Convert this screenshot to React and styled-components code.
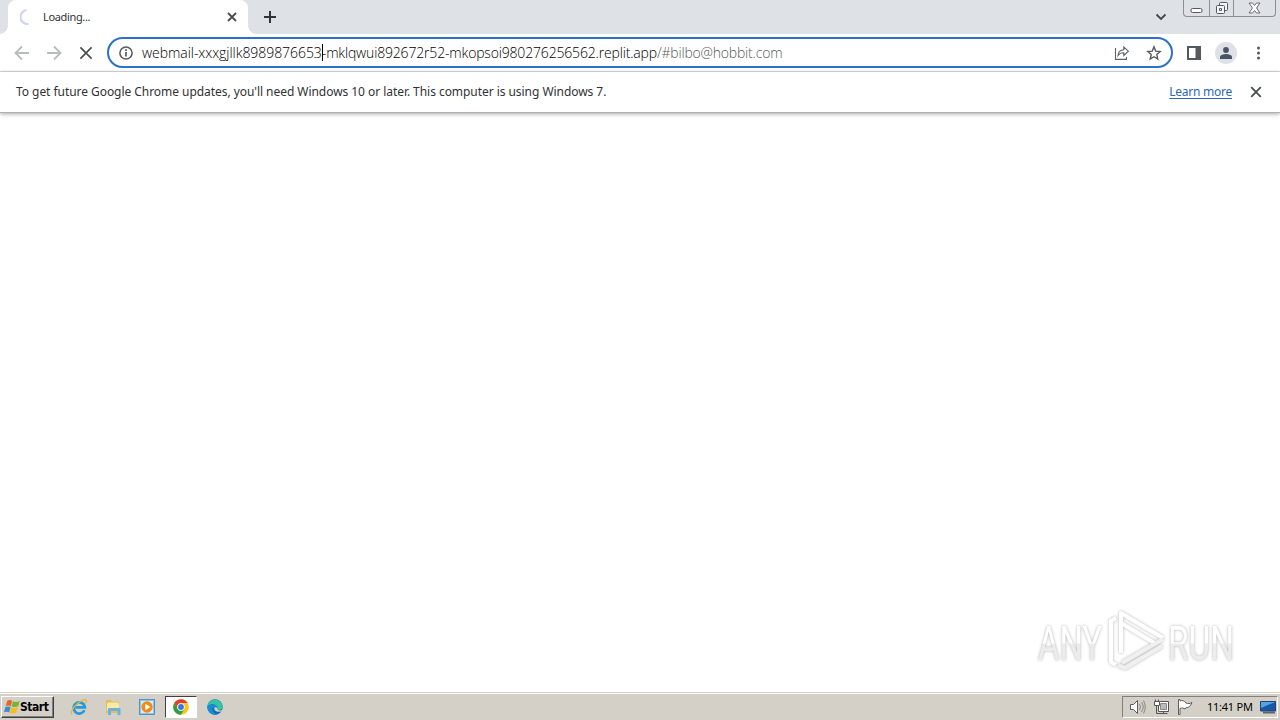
import React from 'react';
import styled, { createGlobalStyle } from 'styled-components';

const GlobalStyle = createGlobalStyle`
  * {
    box-sizing: border-box;
  }
  body {
    margin: 0;
    background: #fff;
    font-family: "Noto Sans", "Open Sans", sans-serif;
    overflow: hidden;
  }
  svg {
    display: block;
    flex: none;
  }
`;

const Screen = styled.div`
  display: flex;
  flex-direction: column;
  width: 1280px;
  height: 720px;
`;

const TabStrip = styled.div`
  display: flex;
  height: 34px;
  padding-left: 8px;
  background: #dee1e6;
`;

const Tab = styled.div`
  position: relative;
  display: flex;
  align-items: center;
  width: 240px;
  padding: 0 11px 0 12px;
  border-radius: 8px 8px 0 0;
  background: #fff;
  &::before,
  &::after {
    content: '';
    position: absolute;
    bottom: 0;
    width: 8px;
    height: 8px;
  }
  &::before {
    left: -8px;
    background: radial-gradient(circle at 0 0, #dee1e6 7.5px, #fff 8px);
  }
  &::after {
    right: -8px;
    background: radial-gradient(circle at 100% 0, #dee1e6 7.5px, #fff 8px);
  }
`;

const Text = styled.span`
  font-size: ${({ $size }) => $size || 12}px;
  line-height: 18px;
  letter-spacing: ${({ $spacing }) => $spacing || 0}px;
  color: ${({ $color }) => $color || '#303235'};
  white-space: pre;
`;

const TabTitle = styled(Text)`
  flex: 1;
  margin-left: 7px;
`;

const NewTab = styled.div`
  margin: 11px 0 0 16px;
`;

const WindowControls = styled.div`
  display: flex;
  margin-left: auto;
`;

const ControlGroup = styled.div`
  display: flex;
  width: 93px;
  height: 17px;
  margin: 0 4px 0 16px;
  border: 1px solid #8a8e96;
  border-top: none;
  border-radius: 0 0 4px 4px;
`;

const Control = styled.div`
  display: flex;
  align-items: center;
  justify-content: center;
  width: ${({ $width }) => $width}px;
  border-left: ${({ $first }) => ($first ? 'none' : '1px solid #8a8e96')};
`;

const Toolbar = styled.div`
  display: flex;
  align-items: center;
  height: 38px;
  padding: 0 13px;
  border-bottom: 1px solid #dadce0;
`;

const NavButton = styled.div`
  display: flex;
  justify-content: center;
  width: 18px;
  margin-right: 14px;
`;

const AddressBar = styled.div`
  display: flex;
  align-items: center;
  width: 1066px;
  height: 31px;
  margin-left: -2px;
  padding: 0 9px 0 10px;
  border: 2px solid #2a70cc;
  border-radius: 16px;
`;

const Url = styled.div`
  display: flex;
  flex: 1;
  align-items: center;
  margin-left: 9px;
`;

const UrlText = styled(Text)`
  font-family: "Open Sans", "Noto Sans", sans-serif;
  font-weight: 300;
`;

const Caret = styled.i`
  width: 1px;
  height: 17px;
  margin-right: -1px;
  background: #000;
`;

const BarActions = styled.div`
  display: flex;
  gap: 16px;
`;

const PanelButton = styled.div`
  margin-left: 14px;
`;

const Avatar = styled.div`
  display: flex;
  align-items: center;
  justify-content: center;
  width: 22px;
  height: 22px;
  margin: 0 14px;
  border-radius: 50%;
  background: #dee1e6;
`;

const InfoBar = styled.div`
  display: flex;
  align-items: center;
  height: 41px;
  padding: 0 18px 0 16px;
  border-bottom: 1px solid #b0b0b0;
  box-shadow: 0 1px 4px rgba(0, 0, 0, 0.35);
`;

const LearnMore = styled(Text)`
  margin: 0 18px 0 auto;
  text-decoration: underline;
  text-underline-offset: 2px;
`;

const Page = styled.main`
  display: flex;
  flex: 1;
  align-items: flex-end;
  justify-content: flex-end;
  padding-bottom: 19px;
`;

const Taskbar = styled.div`
  display: flex;
  align-items: center;
  height: 28px;
  padding: 1px 2px 0 1px;
  border-top: 1px solid #d4d0c8;
  box-shadow: inset 0 1px #fff;
  background: #d4d0c8;
`;

const StartButton = styled.div`
  display: flex;
  align-items: center;
  width: 53px;
  height: 22px;
  padding-left: 2px;
  border: 1px solid;
  border-color: #fff #404040 #404040 #fff;
  box-shadow: inset -1px -1px #808080;
  font: bold 12px "DejaVu Sans Condensed", "DejaVu Sans", sans-serif;
  letter-spacing: -0.45px;
  color: #000;
`;

const Launchers = styled.div`
  display: flex;
  margin-left: 9px;
`;

const Launcher = styled.div`
  display: flex;
  align-items: center;
  justify-content: center;
  width: 32px;
  height: 22px;
  margin-right: 2px;
  border: 1px solid;
  border-color: ${({ $active }) => ($active ? '#404040 #fff #fff #404040' : 'transparent')};
  background: ${({ $active }) => ($active ? '#fff' : 'transparent')};
`;

const Tray = styled.div`
  display: flex;
  align-items: center;
  gap: 7px;
  width: 156px;
  height: 22px;
  margin-left: auto;
  padding-left: 6px;
  border: 1px solid;
  border-color: #808080 #fff #fff #808080;
`;

const Clock = styled(Text)`
  margin-left: 7px;
`;

const WatermarkSvg = styled.svg`
  filter: drop-shadow(0 0 1.5px rgba(0, 0, 0, 0.3));
`;

const Cross = ({ size = 10, color = '#4a4d51', weight = 1.6 }) => (
  <svg width={size} height={size} viewBox="0 0 10 10" stroke={color} strokeWidth={weight}>
    <path d="M1 1l8 8M9 1l-8 8" />
  </svg>
);

const Arrow = ({ flip }) => (
  <svg width="18" height="18" viewBox="0 0 18 18" fill="none" stroke="#b9bbbe" strokeWidth="1.8" transform={flip ? 'scale(-1 1)' : undefined}>
    <path d="M16 9H3M9 2.5L2.5 9L9 15.5" />
  </svg>
);

const Spinner = () => (
  <svg width="16" height="16" viewBox="0 0 16 16" fill="none" stroke="#c9d2f8" strokeWidth="2">
    <path d="M6.5 1.1A7 7 0 0 0 8.5 15" />
  </svg>
);

const InfoIcon = () => (
  <svg width="14" height="14" viewBox="0 0 14 14" fill="none" stroke="#55585c" strokeWidth="1.5">
    <circle cx="7" cy="7" r="6.1" />
    <path d="M7 6v4.5M7 3.3v1.6" strokeWidth="1.7" />
  </svg>
);

const ShareIcon = () => (
  <svg width="16" height="16" viewBox="0 0 16 16" fill="none" stroke="#5f6368" strokeWidth="1.1">
    <path d="M1.5 3v11.4h11v-2.5" />
    <path d="M4 10.5C4.3 6.7 6.2 4.9 9.8 4.7V2l4.6 4.2-4.6 4.2V7.8C7.2 7.7 5.4 8.5 4 10.5z" />
  </svg>
);

const StarIcon = () => (
  <svg width="16" height="16" viewBox="0 0 16 16" fill="none" stroke="#55585c" strokeWidth="1.4">
    <path d="M8 1.8l1.7 4.3 4.5.4-3.4 3.1 1 4.4L8 11.7l-3.8 2.3 1-4.4-3.4-3.1 4.5-.4z" />
  </svg>
);

const PanelIcon = () => (
  <svg width="14" height="14" viewBox="0 0 14 14">
    <path d="M1 1h12v12H1z" fill="none" stroke="#55585c" strokeWidth="2" />
    <path d="M8.5 1H13v12H8.5z" fill="#55585c" />
  </svg>
);

const WindowsFlag = () => (
  <svg width="16" height="16" viewBox="0 0 16 16">
    <path d="M3.2 1.7c2-1 3.5-.8 5 .1L6.8 7.3C5 6.3 3.5 6.4 1.7 7.2z" fill="#e8642d" />
    <path d="M8.9 2.2c2 1 4 .9 6.8-.2l-1.5 5.3c-2 1-4.3 1.1-6.6.2z" fill="#78b52e" />
    <path d="M1.4 8.1C3.5 7.2 5 7.3 6.6 8.1L5.1 13.5C4 12.6 2.2 12.5 0 13.3z" fill="#3c8bd0" />
    <path d="M7.3 8.4c2 1 4.3.9 6.6-.1L12.4 13.7c-2 1-4.3 1.1-6.6.2z" fill="#f5bd24" />
  </svg>
);

const ExplorerE = () => (
  <svg width="18" height="18" viewBox="0 0 17 17" fill="none">
    <path d="M13.6 11.5A5.3 5.3 0 1 1 14 8.9H5" stroke="#269bdc" strokeWidth="2.6" />
    <path d="M2 15.5C-1 13 6 4.5 12 2c4-1.7 4 1 2.8 3" stroke="#e5b73b" strokeWidth="1.2" />
  </svg>
);

const FolderIcon = () => (
  <svg width="16" height="16" viewBox="0 0 16 16">
    <path d="M1 1h5l1 1.5h7V14H1z" fill="#e3bf5b" />
    <path d="M3 3.5h10l1 2v6H2V5z" fill="#fbeaa2" />
    <path d="M3 16V10q0-1 1-1h10.500q1 0 1 1v6H12.500v-4H6v4z" fill="#6cb2dc" />
  </svg>
);

const MediaIcon = () => (
  <svg width="16" height="16" viewBox="0 0 16 16">
    <rect x=".5" y=".5" width="15" height="15" fill="#8ac5ec" stroke="#4e93c9" />
    <rect x="2" y="2" width="12" height="12" fill="#d9edf9" />
    <circle cx="8" cy="8" r="5.7" fill="#f48a16" />
    <path d="M6.3 4.7l5.2 3.3-5.2 3.3z" fill="#fff" />
  </svg>
);

const ChromeIcon = () => (
  <svg width="16" height="16" viewBox="0 0 16 16">
    <circle cx="8" cy="8" r="7.8" fill="#f7c71d" />
    <path d="M1.25 4.1A7.8 7.8 0 0 1 14.75 4.1H8A3.9 3.9 0 0 0 4.62 9.95z" fill="#df3e30" />
    <path d="M1.25 4.1A7.8 7.8 0 0 0 8 15.8L11.38 9.95A3.9 3.9 0 0 1 4.62 9.95z" fill="#2b9d4c" />
    <circle cx="8" cy="8" r="3.7" fill="#fff" />
    <circle cx="8" cy="8" r="2.9" fill="#3479e0" />
  </svg>
);

const EdgeIcon = () => (
  <svg width="16" height="16" viewBox="0 0 16 16">
    <circle cx="8" cy="8" r="7.7" fill="#1669b4" />
    <path d="M.4 7A7.7 7.7 0 0 1 15.7 8c0 2.3-2 3.3-4.4 3.1-1.4-.2-1.9-.8-1.3-1.5C11.3 6.500 5.500 3 .4 7z" fill="#35c4a0" />
    <path d="M.4 7C5 3 11.3 6.5 10 9.6c-.7-.9-1.7-1.5-2.9-1.3C3.5 9 6 14.5 10 15.4A7.7 7.7 0 0 1 .4 7z" fill="#168dd5" />
    <path d="M7.6 8.500c-1.400 3 2.900 5.500 6.900 3.800L16 10.800c-2 1.200-5.500.8-5.800-1.100.2-1.200-1.600-1.900-2.600-1.200z" fill="#d4d0c8" />
  </svg>
);

const SpeakerIcon = () => (
  <svg width="17" height="16" viewBox="0 0 17 16" fill="none" stroke="#5c5c5c">
    <path d="M1.5 5.5h3l4-4v13l-4-4h-3z" fill="#fff" />
    <path d="M10.5 5q2 3 0 6M12.5 3q3.5 5 0 10M14.5 1.5q3.5 6.5 0 13" stroke="#888" />
  </svg>
);

const NetworkIcon = () => (
  <svg width="17" height="16" viewBox="0 0 17 16" fill="none" stroke="#555">
    <path d="M5.500 2.500h10v10h-10z" fill="#fff" />
    <path d="M7.500 4.500h6v6h-6z" fill="#bbb" stroke="#888" />
    <path d="M1.500 2.500h5v4h-5zM2.500 2.500V.5M5.500 2.500V.5" fill="#fff" />
    <path d="M3.500 6.500v8h11M10.500 12.500v2" />
  </svg>
);

const FlagIcon = () => (
  <svg width="16" height="16" viewBox="0 0 16 16" fill="#fff" stroke="#5c5c5c">
    <path d="M1.5.5v15H3V9.500c2-1 3.500-.5 5 .5l1-1.500c2 .5 4-.5 6-5-2 1-4 1.500-6 .5C7.500 1.500 5 1 3 2V.5z" />
  </svg>
);

const DesktopIcon = () => (
  <svg width="16" height="15" viewBox="0 0 16 15">
    <path d="M.5 1.5h15V11H.5z" fill="#1759a8" stroke="#24426b" />
    <path d="M1 2h14L1 8z" fill="#55a3e2" />
    <path d="M3 11.5h12V13.5H3z" fill="#5d6573" />
  </svg>
);

const Watermark = () => (
  <WatermarkSvg width="246" height="64" viewBox="0 0 246 64">
    <defs>
      <linearGradient id="fade" gradientUnits="userSpaceOnUse" x1="0" y1="0" x2="0" y2="64">
        <stop offset=".53" stopColor="#fff" />
        <stop offset=".55" stopColor="#ececec" />
      </linearGradient>
    </defs>
    <g fill="url(#fade)" fontFamily="Roboto, sans-serif" fontSize="48">
      <text x="4" y="51" textLength="64" lengthAdjust="spacingAndGlyphs">ANY</text>
      <text x="134" y="51" textLength="66" lengthAdjust="spacingAndGlyphs">RUN</text>
    </g>
    <g fill="none" stroke="#fff" strokeWidth="4" strokeLinejoin="round">
      <path d="M82 9L77 12V53L82 56" />
      <path d="M87 44V4L129 29" />
      <path d="M87 14L122 35" />
      <path d="M129 30L88 54M128 37L91 59L84 56" stroke="#f0f0f0" />
    </g>
  </WatermarkSvg>
);

export default function App() {
  return (
    <Screen>
      <GlobalStyle />
      <TabStrip>
        <Tab>
          <Spinner />
          <TabTitle $size={11} $spacing={-0.35}>Loading...</TabTitle>
          <Cross size={10} weight={1.8} />
        </Tab>
        <NewTab>
          <svg width="12" height="12" viewBox="0 0 12 12" stroke="#303338" strokeWidth="2">
            <path d="M6 0v12M0 6h12" />
          </svg>
        </NewTab>
        <WindowControls>
          <svg width="12" height="34" viewBox="0 0 12 34" fill="none" stroke="#44474c" strokeWidth="1.8">
            <path d="M1.5 14.5L6 19l4.500-4.500" />
          </svg>
          <ControlGroup>
            <Control $width={25} $first>
              <svg width="13" height="14" viewBox="0 0 13 14">
                <rect x="1" y="7.5" width="11" height="4" rx="1.5" fill="#fff" stroke="#555962" />
              </svg>
            </Control>
            <Control $width={25}>
              <svg width="14" height="14" viewBox="0 0 14 14" fill="#f5f6f8" stroke="#555962">
                <rect x="4.5" y="1.5" width="8" height="8" rx="1" />
                <rect x="1.5" y="4.5" width="8" height="8" rx="1" />
                <path d="M4.5 7.5h2v2h-2z" />
              </svg>
            </Control>
            <Control $width={42}>
              <svg width="13" height="12" viewBox="0 0 13 12" fill="#fff" stroke="#686c73">
                <path d="M1 1h3.5l2 2.5L8.5 1H12L8.5 6l3.5 5H8.5l-2-2.5-2 2.5H1l3.5-5z" />
              </svg>
            </Control>
          </ControlGroup>
        </WindowControls>
      </TabStrip>
      <Toolbar>
        <NavButton><Arrow /></NavButton>
        <NavButton><Arrow flip /></NavButton>
        <NavButton><Cross size={14} weight={1.2} /></NavButton>
        <AddressBar>
          <InfoIcon />
          <Url>
            <UrlText $size={14} $spacing={-0.05} $color="#000">webmail-xxxgjllk8989876653</UrlText>
            <Caret />
            <UrlText $size={14} $spacing={-0.17} $color="#000">-mklqwui892672r52-mkopsoi980276256562.replit.app</UrlText>
            <UrlText $size={14} $spacing={-0.2} $color="#55585c">/#bilbo@hobbit.com</UrlText>
          </Url>
          <BarActions>
            <ShareIcon />
            <StarIcon />
          </BarActions>
        </AddressBar>
        <PanelButton><PanelIcon /></PanelButton>
        <Avatar>
          <svg width="12" height="12" viewBox="0 0 12 12" fill="#4a5367">
            <circle cx="6" cy="3" r="2.9" />
            <path d="M0 12V9.5C1 6 11 6 12 9.5V12z" />
          </svg>
        </Avatar>
        <svg width="14" height="14" viewBox="0 0 14 14" fill="#55585c">
          <circle cx="7.5" cy="2" r="1.5" />
          <circle cx="7.5" cy="7" r="1.5" />
          <circle cx="7.5" cy="12" r="1.5" />
        </svg>
      </Toolbar>
      <InfoBar>
        <Text $spacing={-0.05}>To get future Google Chrome updates, you'll need Windows 10 or later. This computer is using Windows 7.</Text>
        <LearnMore $color="#2b69b5" $spacing={-0.25}>Learn more</LearnMore>
        <Cross size={12} weight={1.5} />
      </InfoBar>
      <Page>
        <Watermark />
      </Page>
      <Taskbar>
        <StartButton>
          <WindowsFlag />
          Start
        </StartButton>
        <Launchers>
          <Launcher><ExplorerE /></Launcher>
          <Launcher><FolderIcon /></Launcher>
          <Launcher><MediaIcon /></Launcher>
          <Launcher $active><ChromeIcon /></Launcher>
          <Launcher><EdgeIcon /></Launcher>
        </Launchers>
        <Tray>
          <SpeakerIcon />
          <NetworkIcon />
          <FlagIcon />
          <Clock $size={11} $spacing={-0.25} $color="#000">11:41 PM</Clock>
          <DesktopIcon />
        </Tray>
      </Taskbar>
    </Screen>
  );
}
